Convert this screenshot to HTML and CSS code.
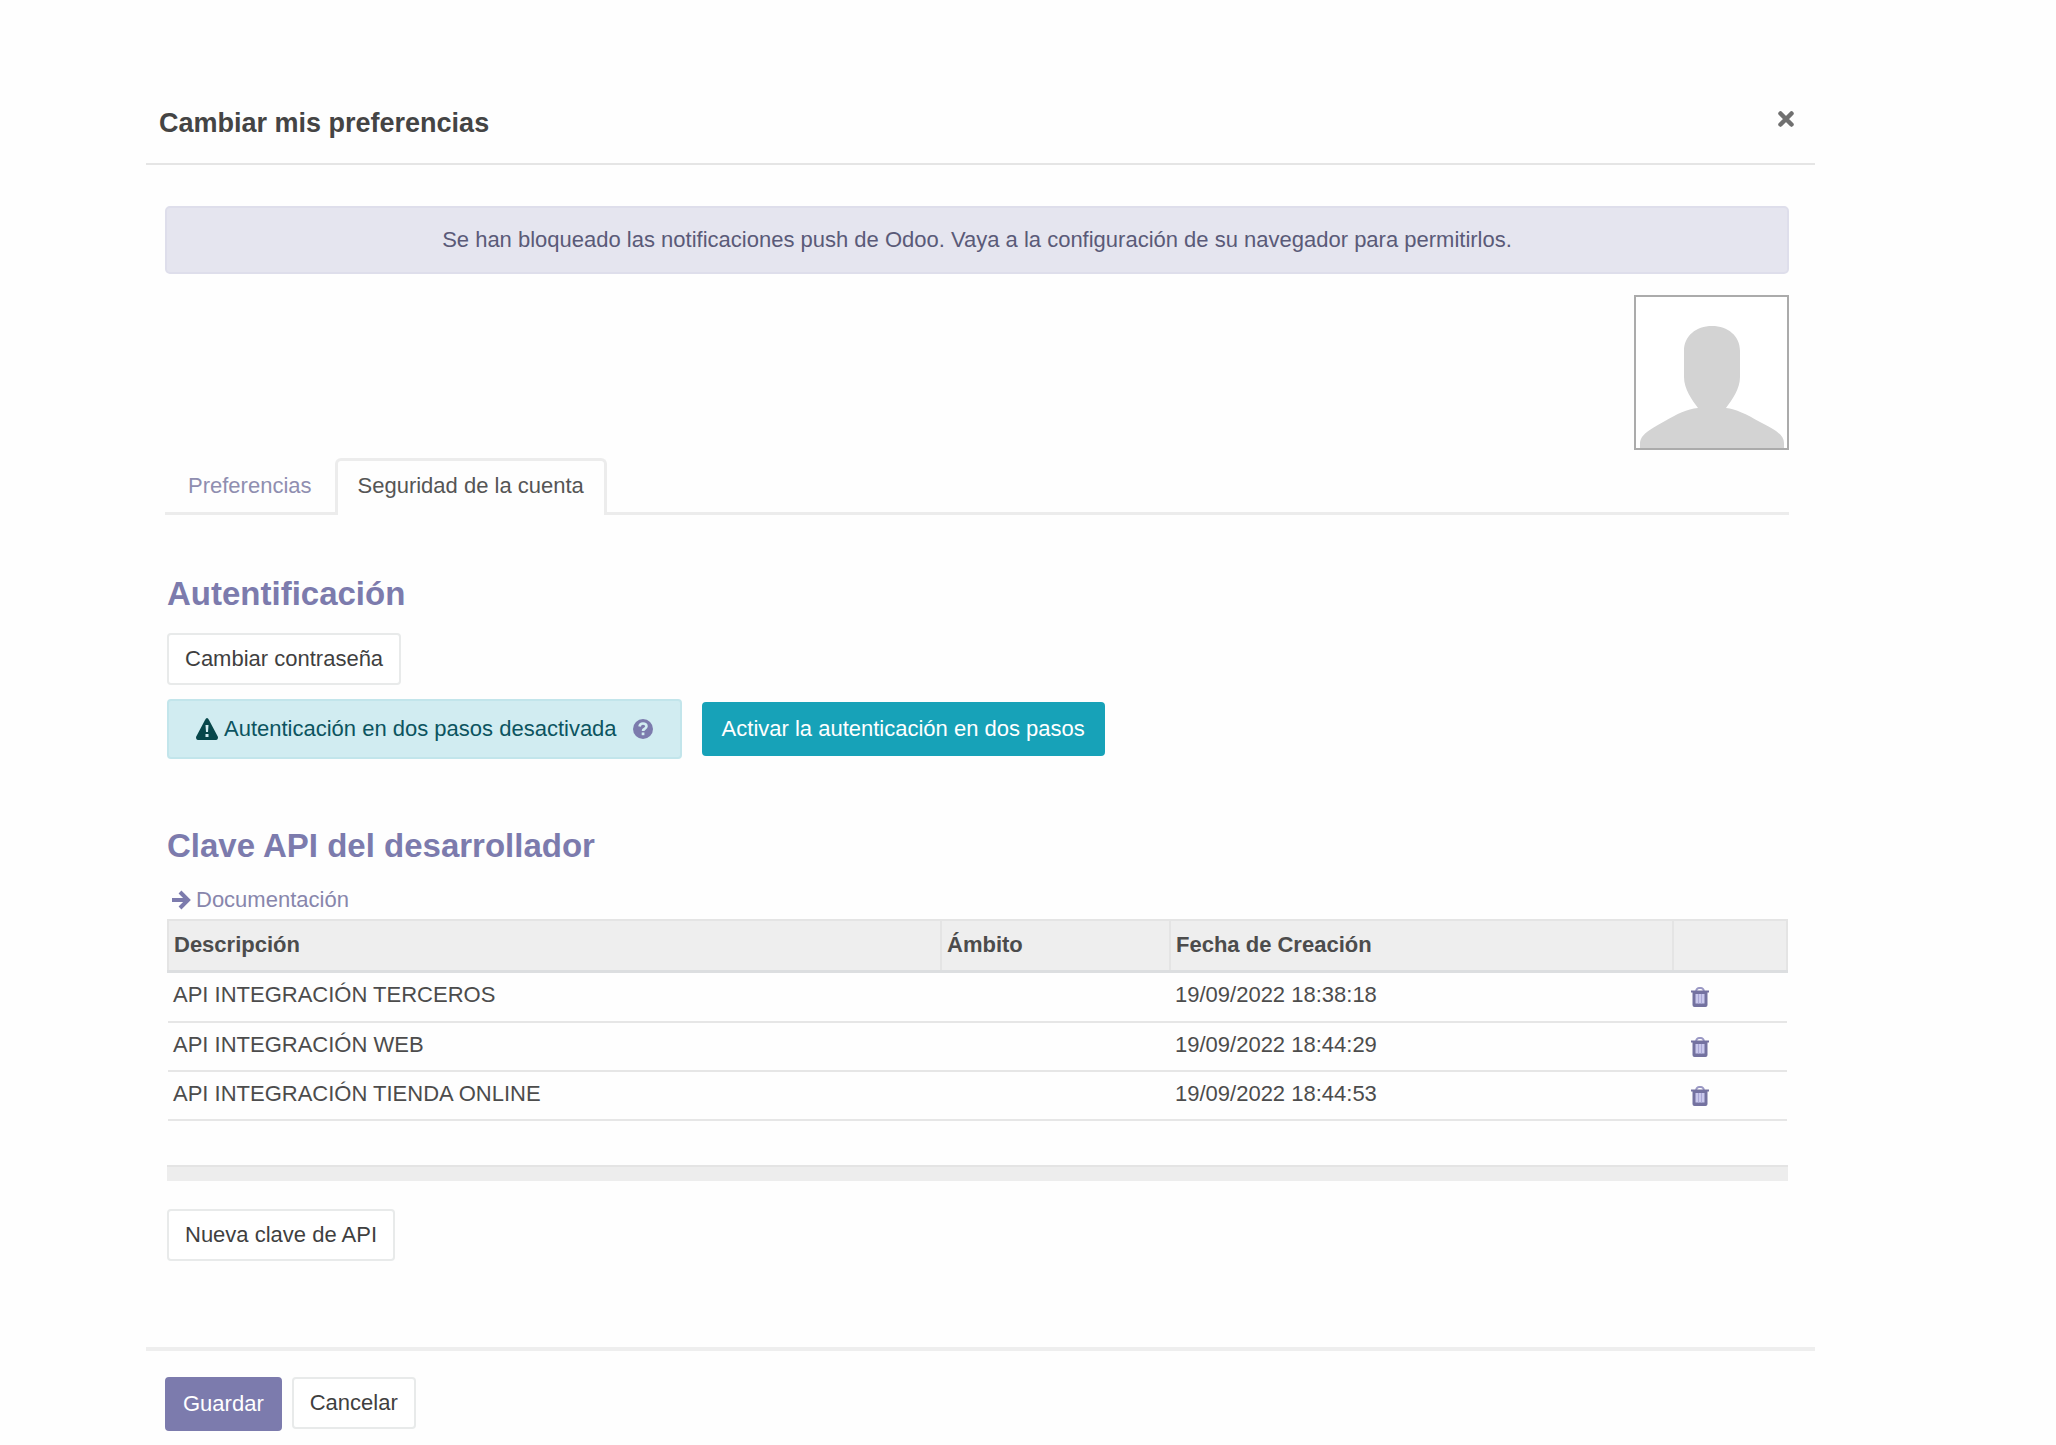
FILE: index.html
```html
<!DOCTYPE html>
<html lang="es">
<head>
<meta charset="utf-8">
<meta name="viewport" content="width=device-width, initial-scale=1">
<title>Cambiar mis preferencias</title>
<link rel="stylesheet" href="styles.css">
</head>
<body>
<svg class="sprite" aria-hidden="true">
  <symbol id="trash" viewBox="0 0 18 20">
    <path d="M5 4 Q6 1 8 1 H10 Q12 1 13 4" fill="none" stroke="#9a98c4" stroke-width="2"/>
    <path d="M0 3.500 H18 V5.500 H16.500 V18 Q16.500 20 14.500 20 H3.500 Q1.500 20 1.500 18 V5.500 H0 Z" fill="currentColor"/>
    <path d="M4.500 7 H13.500 V16.500 H4.500 Z" fill="#c9c8ec"/>
    <path d="M7.500 7 V16.500 M10.500 7 V16.500" stroke="#a9a7d6" stroke-width="1"/>
  </symbol>
</svg>
<main class="modal">
  <header class="modal-header">
    <h1 class="modal-title">Cambiar mis preferencias</h1>
    <button class="close" type="button" aria-label="Cerrar">
      <svg width="18" height="18" viewBox="0 0 18 18"><path d="M3.500 3.500 L14.500 14.500 M14.500 3.500 L3.500 14.500" stroke="currentColor" stroke-width="4.500" stroke-linecap="round"/></svg>
    </button>
  </header>

  <div class="modal-body">
    <div class="alert" role="alert">Se han bloqueado las notificaciones push de Odoo. Vaya a la configuración de su navegador para permitirlos.</div>

    <div class="avatar">
      <svg viewBox="0 0 151 151" role="img" aria-label="Avatar">
        <path d="M76 29 C92 29 104 39 104 54 V80 C104 92 96 103 90 111 C100 112 110 117 124 125 C136 131 148 137 148 146 V151 H4 V146 C5 136 17 131 29 124 C41 117 51 112 62 111 C56 103 48 92 48 80 V54 C48 39 60 29 76 29 Z" fill="#d3d3d3"/>
      </svg>
    </div>

    <nav class="tabs">
      <a class="tab" href="#preferencias">Preferencias</a>
      <a class="tab tab-active" href="#seguridad" aria-current="page">Seguridad de la cuenta</a>
    </nav>

    <div class="content" id="seguridad">
      <section class="auth">
        <h2 class="section-title">Autentificación</h2>
        <button class="btn" type="button">Cambiar contraseña</button>
        <div class="two-factor">
          <div class="status">
            <svg class="warning" width="22" height="22" viewBox="0 0 22 22" aria-hidden="true">
              <path d="M11 0 Q12 0 13 2 L22 19 Q22 22 20 22 H2 Q0 22 0 19 L9 2 Q10 0 11 0 Z" fill="currentColor"/>
              <path d="M9.500 7 H12.500 L12 14 H10 Z M9.500 16 H12.500 V19 H9.500 Z" fill="#d1ecf1"/>
            </svg>
            <span>Autenticación en dos pasos desactivada</span>
            <a class="help" href="#ayuda" aria-label="Ayuda">
              <svg width="20" height="20" viewBox="0 0 20 20">
                <circle cx="10" cy="10" r="10" fill="currentColor"/>
                <path d="M6.500 7.500 Q7 4.500 10 4.500 Q13.500 4.500 13.500 7.300 Q13.500 9 11.500 10 Q10 10.800 10 12" fill="none" stroke="#d1ecf1" stroke-width="2.600"/>
                <rect x="8.700" y="13.500" width="2.700" height="2.700" fill="#d1ecf1"/>
              </svg>
            </a>
          </div>
          <button class="btn btn-info" type="button">Activar la autenticación en dos pasos</button>
        </div>
      </section>

      <section>
        <h2 class="section-title">Clave API del desarrollador</h2>
        <a class="doc-link" href="#documentacion">
          <svg width="20" height="20" viewBox="0 0 20 20" aria-hidden="true"><path d="M1 10 H16 M9 2 L17 10 L9 18" fill="none" stroke="#7c7bad" stroke-width="4"/></svg>
          Documentación
        </a>
        <table class="keys">
          <colgroup><col class="col-desc"><col class="col-scope"><col class="col-date"><col></colgroup>
          <thead>
            <tr><th scope="col">Descripción</th><th scope="col">Ámbito</th><th scope="col">Fecha de Creación</th><th></th></tr>
          </thead>
          <tbody>
            <tr><td>API INTEGRACIÓN TERCEROS</td><td></td><td>19/09/2022 18:38:18</td><td class="action"><button class="delete" type="button" aria-label="Eliminar"><svg width="18" height="20"><use href="#trash"/></svg></button></td></tr>
            <tr><td>API INTEGRACIÓN WEB</td><td></td><td>19/09/2022 18:44:29</td><td class="action"><button class="delete" type="button" aria-label="Eliminar"><svg width="18" height="20"><use href="#trash"/></svg></button></td></tr>
            <tr><td>API INTEGRACIÓN TIENDA ONLINE</td><td></td><td>19/09/2022 18:44:53</td><td class="action"><button class="delete" type="button" aria-label="Eliminar"><svg width="18" height="20"><use href="#trash"/></svg></button></td></tr>
          </tbody>
        </table>
        <div class="keys-footer"></div>
        <button class="btn" type="button">Nueva clave de API</button>
      </section>
    </div>
  </div>

  <footer class="modal-footer">
    <button class="btn btn-primary" type="button">Guardar</button>
    <button class="btn" type="button">Cancelar</button>
  </footer>
</main>
</body>
</html>
```

FILE: styles.css
```css
* { box-sizing: border-box; }

body {
  margin: 0;
  background: #fefefe;
  color: #4c4c4c;
  font: 22px/32px "Liberation Sans", Arial, sans-serif;
}

a { color: #7c7bad; text-decoration: none; }

button { font: inherit; cursor: pointer; }

svg { display: block; flex: none; }

.sprite { display: none; }

.modal { padding: 80px 241px 12px 146px; }

.modal-header {
  display: flex;
  justify-content: space-between;
  align-items: center;
  height: 85px;
  padding: 2px 20px 0 13px;
  border-bottom: 2px solid #e5e5e5;
}

.modal-title {
  margin: 0;
  color: #444;
  font-size: 27px;
  line-height: 40px;
}

.close {
  padding: 0 0 8px;
  border: 0;
  background: none;
  color: #707070;
}

.modal-body { padding: 41px 26px 0 19px; }

.alert {
  padding: 16px;
  border: 2px solid #dedeeb;
  border-radius: 5px;
  background: #e5e5ef;
  color: #5a5a78;
  text-align: center;
}

.avatar {
  width: 155px;
  height: 155px;
  margin: 21px 0 8px auto;
  border: 2px solid #ababab;
  background: #fff;
}

.tabs {
  display: flex;
  border-bottom: 3px solid #ececec;
}

.tab {
  padding: 9px 20px 10px;
  border: 3px solid transparent;
  border-bottom: 0;
  color: #8f8eb0;
}

.tab-active {
  margin-bottom: -3px;
  padding-bottom: 13px;
  border-color: #ececec;
  border-radius: 6px 6px 0 0;
  background: #fefefe;
  color: #555;
}

.content { padding: 58px 1px 0 2px; }

.auth { margin-bottom: 66px; }

.section-title {
  margin: 0 0 19px;
  color: #7c7bad;
  font-size: 33px;
  line-height: 41px;
}

.btn {
  height: 52px;
  padding: 0 16px;
  border: 2px solid #e8eaea;
  border-radius: 4px;
  background: #fff;
  color: #3f3f3f;
  line-height: 44px;
}

.btn-info {
  height: 54px;
  padding: 0 18px;
  border-color: #17a2b8;
  background: #17a2b8;
  color: #fff;
}

.btn-primary {
  height: 54px;
  border-color: #7c7bad;
  background: #7c7bad;
  color: #fff;
}

.two-factor {
  display: flex;
  align-items: center;
  gap: 20px;
  margin-top: 14px;
}

.status {
  display: flex;
  align-items: center;
  height: 60px;
  padding: 0 27px;
  border: 2px solid #c2e5eb;
  border-radius: 4px;
  background: #d1ecf1;
  color: #0c5460;
}

.warning { margin-right: 6px; color: #07474b; }

.help { margin-left: 16px; }

.doc-link {
  display: flex;
  align-items: center;
  gap: 5px;
  width: max-content;
  margin-top: -1px;
  margin-bottom: 3px;
  padding-left: 4px;
  color: #8886ac;
}

.keys {
  width: 100%;
  border-collapse: collapse;
  table-layout: fixed;
}

.col-desc { width: 773px; }
.col-scope { width: 229px; }
.col-date { width: 503px; }

.keys th {
  height: 51px;
  padding: 0 5px;
  border: 2px solid #e4e4e4;
  border-bottom: 3px solid #dcdee0;
  background: #eee;
  text-align: left;
}

.keys td {
  height: 49px;
  padding: 0 5px 4px;
  border-bottom: 2px solid #e6e6e6;
}

.keys tbody tr:first-child td { height: 51px; }

.keys .action { padding: 0 18px; }

.delete {
  display: block;
  padding: 0;
  border: 0;
  background: none;
  color: #7472a0;
}

.keys-footer {
  height: 16px;
  margin: 44px 0 28px;
  border-top: 2px solid #e4e4e4;
  background: #ededed;
}

.modal-footer {
  display: flex;
  gap: 10px;
  margin-top: 86px;
  padding: 26px 19px 0;
  border-top: 4px solid #eee;
}
```
